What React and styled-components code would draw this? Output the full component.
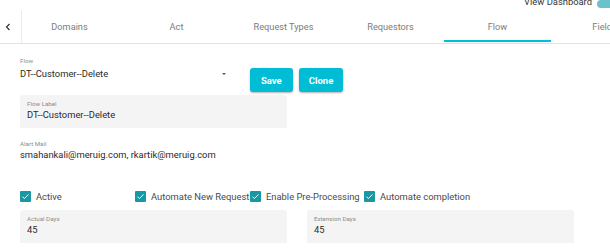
import React from "react";
import styled, { createGlobalStyle } from "styled-components";

const Global = createGlobalStyle`
  html, body { margin: 0; padding: 0; background: #fff; }
  body { font-family: Roboto, "Liberation Sans", Arial, sans-serif; overflow: hidden; }
  * { box-sizing: border-box; }
`;

const Page = styled.div`
  width: 610px;
  height: 252px;
  overflow: hidden;
  position: relative;
`;

const Header = styled.div`
  height: 10px;
  display: flex;
  justify-content: flex-end;
  align-items: flex-end;
  gap: 5px;
  margin-right: -13px;
`;

const HeaderText = styled.span`
  font-size: 9.4px;
  line-height: 10px;
  color: #333;
  transform: translateY(-3px);
`;

const Toggle = styled.span`
  width: 26px;
  height: 8px;
  border-radius: 4px;
  background: #6ac3ca;
  transform: translateY(-2px);
`;

const TabBar = styled.div`
  height: 34px;
  display: flex;
  border-bottom: 1px solid #e2e2e2;
`;

const ScrollButton = styled.div`
  width: 22px;
  flex: none;
  display: flex;
  align-items: center;
  justify-content: flex-start;
  padding-left: 5px;
  border-right: 1px solid #ececec;
  color: #333;
`;

const TabViewport = styled.div`
  flex: 1;
  overflow: hidden;
`;

const TabRow = styled.div`
  display: flex;
  height: 100%;
  margin-left: -6px;
`;

const Tab = styled.div`
  flex: none;
  width: 107px;
  display: flex;
  align-items: center;
  justify-content: center;
  font-size: 9.2px;
  color: #7c7c7c;
  position: relative;
  &::after {
    content: "";
    position: absolute;
    left: 0;
    right: 0;
    bottom: 1px;
    height: 2px;
    background: ${(p) => (p.$active ? "#00c0d8" : "transparent")};
  }
`;

const Content = styled.div`
  padding: 0 20px;
`;

const TopRow = styled.div`
  display: flex;
  align-items: flex-start;
`;

const SelectField = styled.div`
  width: 212px;
  margin-top: 13px;
  position: relative;
`;

const SmallLabel = styled.div`
  font-size: 6.2px;
  line-height: 8px;
  color: #8c8c8c;
`;

const Value = styled.div`
  font-size: 9.4px;
  line-height: 12px;
  color: #2a2a2a;
`;

const SelectValue = styled(Value)`
  margin-top: 3px;
`;

const Arrow = styled.span`
  position: absolute;
  right: 6px;
  top: 16px;
  width: 0;
  height: 0;
  border-left: 2.5px solid transparent;
  border-right: 2.5px solid transparent;
  border-top: 2.5px solid #555;
`;

const Buttons = styled.div`
  display: flex;
  gap: 6px;
  margin-top: 24px;
  margin-left: 18px;
`;

const Button = styled.button`
  height: 24px;
  padding: 0 ${(p) => p.$pad}px;
  border: none;
  border-radius: 3px;
  background: #00bcd4;
  color: #fff;
  font-family: inherit;
  font-weight: 700;
  font-size: 9.5px;
  box-shadow: 0 1px 2px rgba(0, 0, 0, 0.3);
`;

const Filled = styled.div`
  width: 267px;
  height: 33px;
  background: #f4f4f4;
  border-radius: 3px 3px 0 0;
  padding: 5px 7px 0;
`;

const FilledValue = styled(Value)`
  margin-top: 1px;
`;

const PlainField = styled.div`
  margin-top: 12px;
`;

const CheckRow = styled.div`
  display: grid;
  grid-template-columns: 115px 115px 114px auto;
  margin-top: 29px;
  height: 12px;
`;

const CheckItem = styled.label`
  display: flex;
  align-items: center;
  gap: 5px;
  white-space: nowrap;
  font-size: 9.4px;
  color: #4a4a4a;
`;

const Box = styled.span`
  width: 11px;
  height: 11px;
  flex: none;
  background: #1699a5;
  border-radius: 1px;
  display: flex;
  align-items: center;
  justify-content: center;
`;

const FieldRow = styled.div`
  display: flex;
  gap: 20px;
  margin-top: 8px;
`;

const TopField = styled(Filled)`
  margin-top: 3px;
`;

function Check({ label }) {
  return (
    <CheckItem>
      <Box>
        <svg width="9" height="9" viewBox="0 0 24 24">
          <path d="M4 12.5l5 5L20 6.5" fill="none" stroke="#fff" strokeWidth="2.6" />
        </svg>
      </Box>
      {label}
    </CheckItem>
  );
}

export default function App() {
  const tabs = ["Domains", "Act", "Request Types", "Requestors", "Flow", "Fields"];
  return (
    <Page>
      <Global />
      <Header>
        <HeaderText>View Dashboard</HeaderText>
        <Toggle />
      </Header>
      <TabBar>
        <ScrollButton>
          <svg width="6" height="8" viewBox="0 0 6 8">
            <path d="M4.5 1L1.5 4l3 3" fill="none" stroke="#333" strokeWidth="1.2" />
          </svg>
        </ScrollButton>
        <TabViewport>
          <TabRow>
            {tabs.map((t) => (
              <Tab key={t} $active={t === "Flow"}>
                {t}
              </Tab>
            ))}
          </TabRow>
        </TabViewport>
      </TabBar>
      <Content>
        <TopRow>
          <SelectField>
            <SmallLabel>Flow</SmallLabel>
            <SelectValue>DT--Customer--Delete</SelectValue>
            <Arrow />
          </SelectField>
          <Buttons>
            <Button $pad={11}>Save</Button>
            <Button $pad={10}>Clone</Button>
          </Buttons>
        </TopRow>
        <TopField>
          <SmallLabel>Flow Label</SmallLabel>
          <FilledValue>DT--Customer--Delete</FilledValue>
        </TopField>
        <PlainField>
          <SmallLabel>Alart Mail</SmallLabel>
          <FilledValue>smahankali@meruig.com, rkartik@meruig.com</FilledValue>
        </PlainField>
        <CheckRow>
          <Check label="Active" />
          <Check label="Automate New Request" />
          <Check label="Enable Pre-Processing" />
          <Check label="Automate completion" />
        </CheckRow>
        <FieldRow>
          <Filled>
            <SmallLabel>Actual Days</SmallLabel>
            <FilledValue>45</FilledValue>
          </Filled>
          <Filled>
            <SmallLabel>Extension Days</SmallLabel>
            <FilledValue>45</FilledValue>
          </Filled>
        </FieldRow>
      </Content>
    </Page>
  );
}
